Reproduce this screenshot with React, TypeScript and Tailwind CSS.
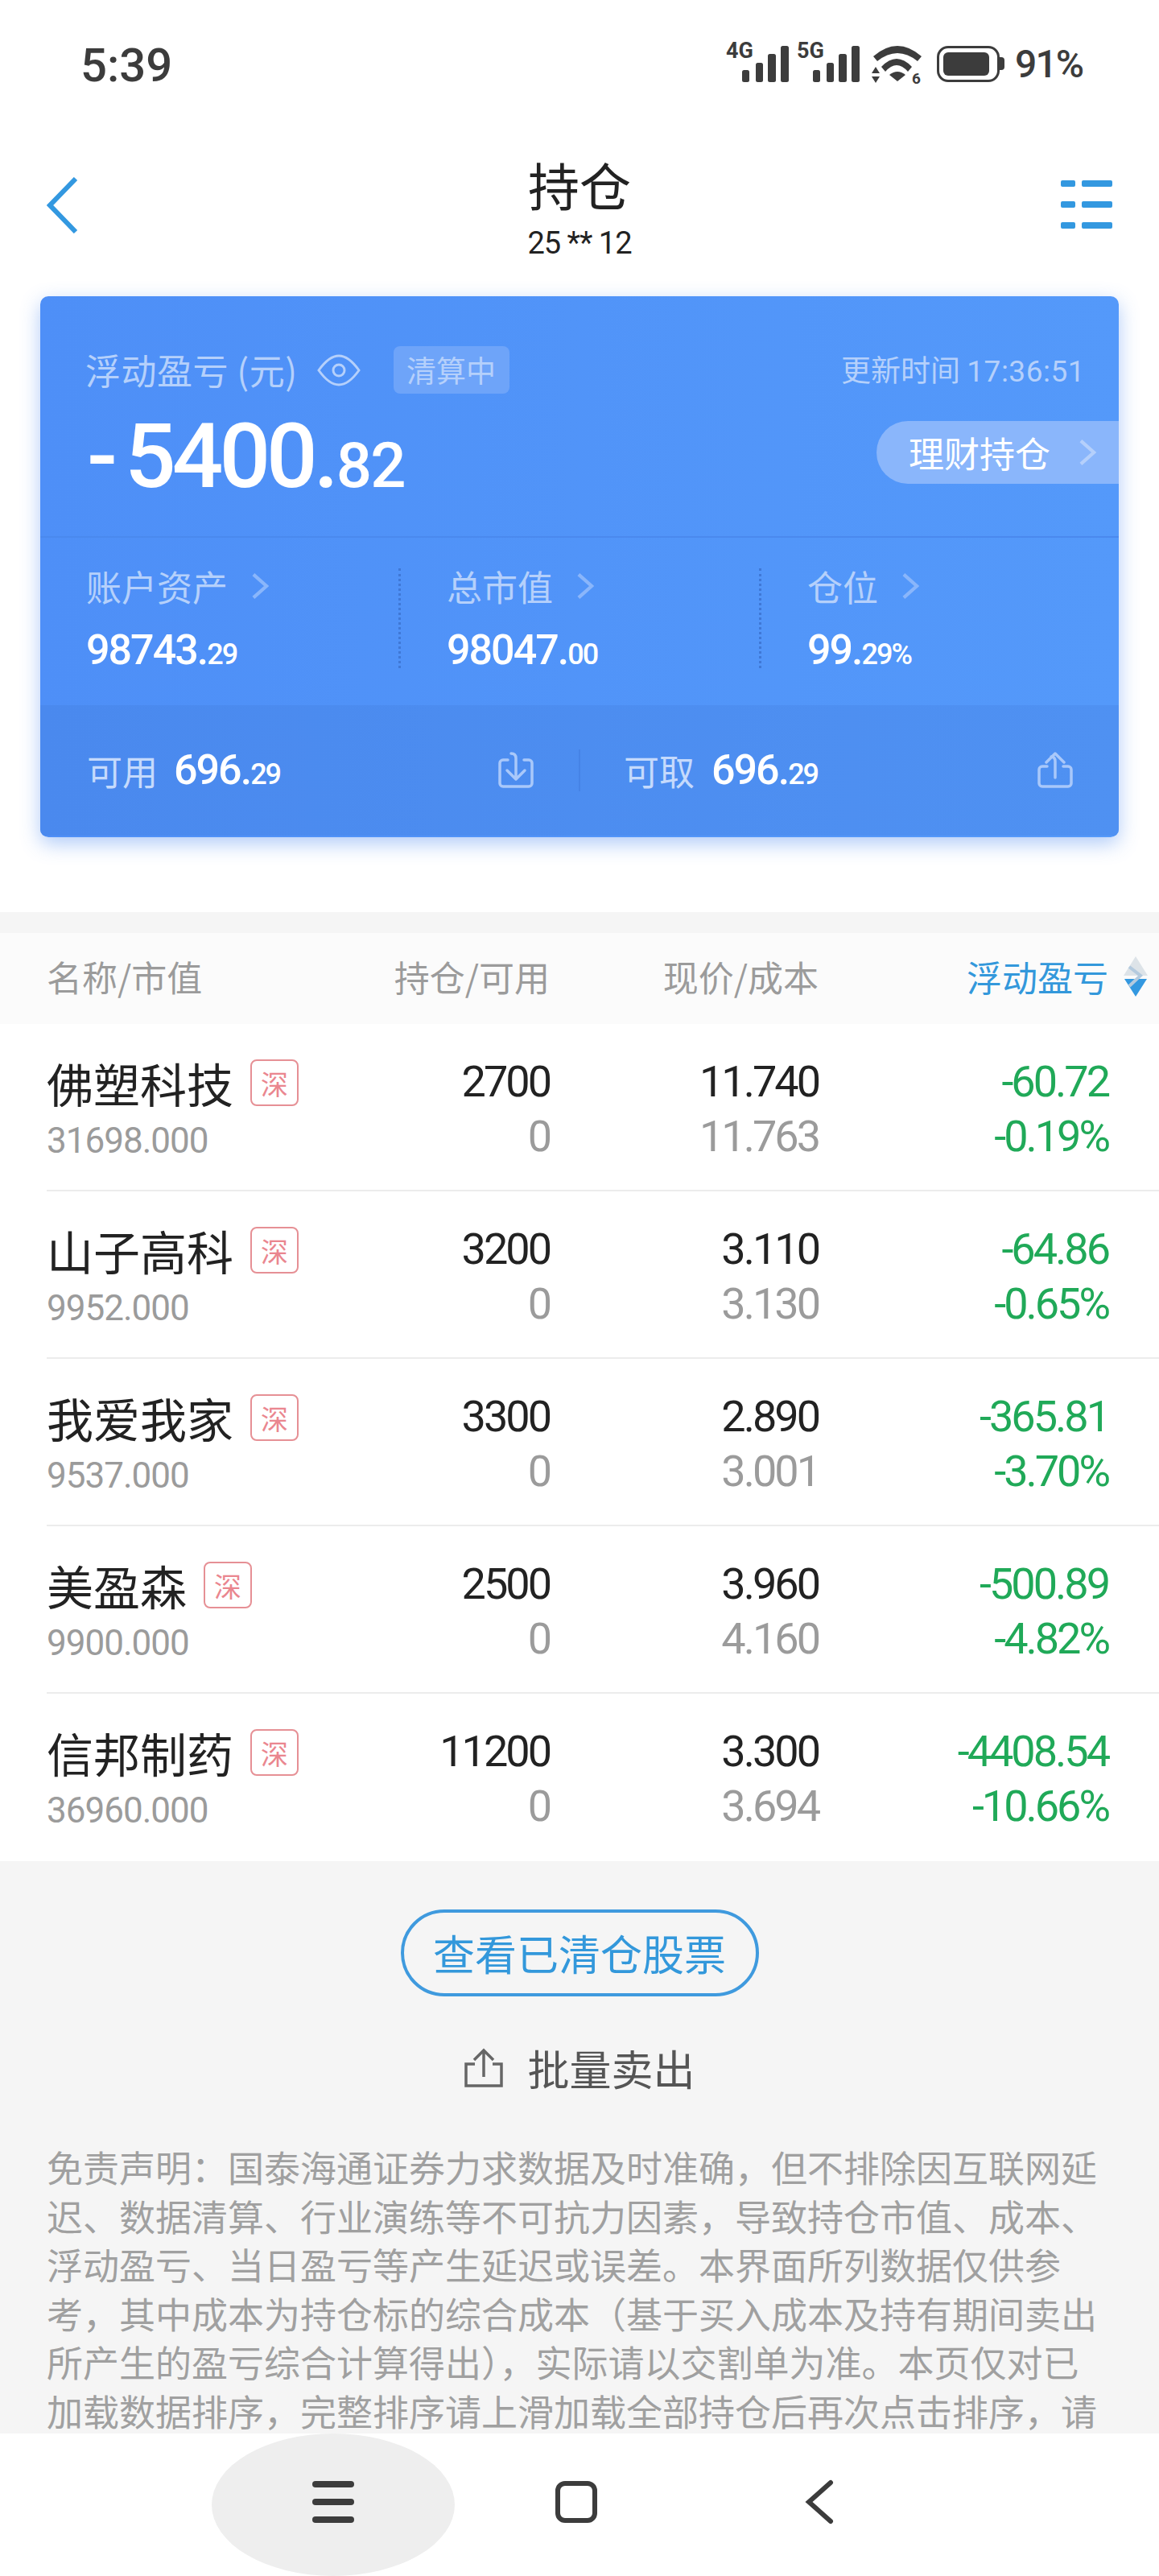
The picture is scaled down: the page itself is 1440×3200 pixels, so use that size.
const num = "[font-family:Roboto,'Noto_Sans_CJK_SC',sans-serif]";

const stocks = [
  { name: '佛塑科技', value: '31698.000', qty: '2700', price: '11.740', cost: '11.763', pl: '-60.72', pct: '-0.19%' },
  { name: '山子高科', value: '9952.000', qty: '3200', price: '3.110', cost: '3.130', pl: '-64.86', pct: '-0.65%' },
  { name: '我爱我家', value: '9537.000', qty: '3300', price: '2.890', cost: '3.001', pl: '-365.81', pct: '-3.70%' },
  { name: '美盈森', value: '9900.000', qty: '2500', price: '3.960', cost: '4.160', pl: '-500.89', pct: '-4.82%' },
  { name: '信邦制药', value: '36960.000', qty: '11200', price: '3.300', cost: '3.694', pl: '-4408.54', pct: '-10.66%' },
];

const stats = [
  { label: '账户资产', big: '98743.', small: '29' },
  { label: '总市值', big: '98047.', small: '00' },
  { label: '仓位', big: '99.', small: '29%' },
];

const disclaimer = [
  '免责声明：国泰海通证券力求数据及时准确，但不排除因互联网延',
  '迟、数据清算、行业演练等不可抗力因素，导致持仓市值、成本、',
  '浮动盈亏、当日盈亏等产生延迟或误差。本界面所列数据仅供参',
  '考，其中成本为持仓标的综合成本（基于买入成本及持有期间卖出',
  '所产生的盈亏综合计算得出），实际请以交割单为准。本页仅对已',
  '加载数据排序，完整排序请上滑加载全部持仓后再次点击排序，请',
];

function Chevron({ className }: { className?: string }) {
  return (
    <svg viewBox="0 0 22 34" className={className} fill="none" stroke="currentColor" strokeWidth="4.5">
      <path d="M2 2l17 15L2 32" />
    </svg>
  );
}

function Signal({ label }: { label: string }) {
  return (
    <div className="relative h-[50px] w-[78px]">
      <span className="absolute left-0 top-[-3px] text-[27px] leading-[27px] font-bold text-[#3c3c3c] [font-family:Roboto,sans-serif]">{label}</span>
      <svg viewBox="0 0 78 50" className="absolute inset-0 h-[50px] w-[78px]" fill="#3c3c3c">
        <rect x="20" y="34" width="9" height="15" rx="2.5" />
        <rect x="37" y="25" width="9" height="24" rx="2.5" />
        <rect x="52" y="14" width="10" height="35" rx="2.5" />
        <rect x="68" y="4" width="10" height="45" rx="2.5" />
      </svg>
    </div>
  );
}

function StatusBar() {
  return (
    <div className="flex h-[140px] shrink-0 items-start justify-between pl-[100px] pr-[95px] pt-[52px] text-[#3c3c3c]">
      <span className="text-[58px] leading-[58px] font-medium [font-family:Roboto,sans-serif]">5:39</span>
      <div className="flex items-start pt-[1px]">
        <Signal label="4G" />
        <div className="ml-[10px]"><Signal label="5G" /></div>
        <svg viewBox="0 0 63 48" className="ml-[15px] mt-[4px] h-[48px] w-[63px] overflow-visible" fill="#3c3c3c">
          <path d="M2 13Q32-13 62 13L57 19Q32-1 7 19Z" />
          <path d="M12 26Q31 6 50 26L45 32Q31 16 17 32Z" />
          <path d="M22 36Q32 28 42 36L32 44Z" />
          <path d="M5 26l5 8H0zM5 46l5-8H0z" />
          <text x="50" y="47" fontSize="19" fontWeight="700" fontFamily="Roboto">6</text>
        </svg>
        <div className="relative ml-[18px] mt-[4px] flex h-[45px] w-[78px] items-center rounded-[14px] border-[3px] border-[#3c3c3c] p-[5px]">
          <div className="h-full w-[57px] rounded-[6px] bg-[#3c3c3c]" />
          <div className="absolute right-[-9px] top-[11px] h-[16px] w-[6px] rounded-r-[4px] bg-[#3c3c3c]" />
        </div>
        <span className="ml-[19px] mt-[2px] text-[48px] leading-[50px] font-medium tracking-[-2px] [font-family:Roboto,sans-serif]">91%</span>
      </div>
    </div>
  );
}

function NavBar() {
  return (
    <div className="flex h-[228px] shrink-0 items-start justify-between px-[58px]">
      <div className="w-[64px]">
        <svg viewBox="0 0 40 70" className="mt-[80px] h-[70px] w-[40px]" fill="none" stroke="#3398e0" strokeWidth="6">
          <path d="M36 2L4 35l32 33" />
        </svg>
      </div>
      <div className="flex flex-col items-center pt-[50px] text-[#222]">
        <div className="text-[64px] leading-[76px] [font-family:'Noto_Sans_CJK_SC',sans-serif]">持仓</div>
        <div className="mt-[18px] text-[38px] leading-[36px] tracking-[-1px] [font-family:Roboto,sans-serif]">25 ** 12</div>
      </div>
      <div className="mt-[84px] flex w-[64px] flex-col gap-[18px]">
        {[0, 1, 2].map((i) => (
          <div key={i} className="flex h-[8px] gap-[8px]">
            <div className="h-full w-[18px] rounded-[2px] bg-[#3398e0]" />
            <div className="h-full flex-1 rounded-[2px] bg-[#3398e0]" />
          </div>
        ))}
      </div>
    </div>
  );
}

function Amount({ big, small }: { big: string; small: string }) {
  return (
    <span className="font-medium text-white [font-family:Roboto,sans-serif]">
      <span className="text-[52px] tracking-[-2px]">{big}</span>
      <span className="text-[36px] tracking-[-2px]">{small}</span>
    </span>
  );
}

function AssetCard() {
  return (
    <div className="mx-[50px] h-[672px] shrink-0 overflow-hidden rounded-[10px] bg-gradient-to-r from-[#4e8ff7] to-[#5499fa] shadow-[0_8px_24px_rgba(80,140,240,0.45)] [font-family:'Noto_Sans_CJK_SC',sans-serif]">
      <div className="relative h-[300px] border-b-2 border-[#4a89ee] pl-[56px]">
        <div className="flex items-center pt-[62px]">
          <span className="text-[44px] leading-[59px] tracking-[0.5px] text-[#b5d0fb]">浮动盈亏 (元)</span>
          <svg viewBox="0 0 54 40" className="ml-[24px] h-[40px] w-[54px]" fill="none" stroke="#b5d0fb" strokeWidth="3">
            <path d="M2 20C12 6 20 2 27 2s15 4 25 18C42 34 34 38 27 38S12 34 2 20z" />
            <circle cx="27" cy="20" r="7" />
          </svg>
          <span className="ml-[41px] flex h-[59px] w-[144px] items-center justify-center rounded-[8px] bg-[#6ea4f9] text-[37px] text-[#b5d0fb]">清算中</span>
          <span className="absolute right-[42px] top-[62px] text-[37px] leading-[56px] text-[#b5d0fb]">更新时间 <span className="[font-family:Roboto,sans-serif] tracking-[0.5px]">17:36:51</span></span>
        </div>
        <div className="mt-[20px] pl-[2px] font-medium text-white [font-family:Roboto,sans-serif] leading-[116px]">
          <span className="text-[112px] tracking-[-5px]"><span className="mr-[14px]">-</span>5400.</span>
          <span className="ml-[2px] text-[78px] tracking-[-2px]">82</span>
        </div>
        <div className="absolute right-0 top-[155px] flex h-[78px] w-[301px] items-center rounded-l-full bg-[#8ab6fb] pl-[40px] text-[44px] text-white">
          <span>理财持仓</span>
          <Chevron className="ml-[36px] h-[36px] w-[21px] text-[#b5d0fb]" />
        </div>
      </div>
      <div className="grid h-[208px] grid-cols-[448px_448px_1fr] pl-[57px] pt-[32px]">
        {stats.map((s, i) => (
          <div key={s.label} className="relative">
            {i > 0 && <div className="absolute left-[-60px] top-[6px] h-[124px] border-l-[3px] border-dotted border-[#3f78d6]" />}
            <div className="flex items-center text-[44px] leading-[56px] text-[#b5d0fb]">
              <span>{s.label}</span>
              <Chevron className="ml-[30px] h-[36px] w-[21px] text-[#8ab6fb]" />
            </div>
            <div className="mt-[20px] leading-[64px]">
              <Amount big={s.big} small={s.small} />
            </div>
          </div>
        ))}
      </div>
      <div className="flex h-[162px] items-center bg-gradient-to-r from-[#4a89ee] to-[#4f91f2] pl-[58px] pr-[56px]">
        <div className="flex w-[611px] items-center">
          <span className="text-[44px] text-[#c5dafc]">可用</span>
          <span className="ml-[20px]"><Amount big="696." small="29" /></span>
          <svg viewBox="0 0 46 46" className="ml-auto mr-[55px] h-[46px] w-[46px]" fill="none" stroke="#a9c8fa" strokeWidth="3.5" strokeLinecap="round" strokeLinejoin="round">
            <path d="M13 10H7a4 4 0 0 0-4 4v25a4 4 0 0 0 4 4h32a4 4 0 0 0 4-4V14a4 4 0 0 0-4-4h-6M17 2c4 0 6 2 6 6v24M12 23l11 11 11-11" />
          </svg>
        </div>
        <div className="h-[52px] w-[2px] bg-[#4683e6]" />
        <div className="flex flex-1 items-center pl-[54px]">
          <span className="text-[44px] text-[#c5dafc]">可取</span>
          <span className="ml-[21px]"><Amount big="696." small="29" /></span>
          <svg viewBox="0 0 46 46" className="ml-auto h-[46px] w-[46px]" fill="none" stroke="#a9c8fa" strokeWidth="3.5" strokeLinecap="round" strokeLinejoin="round">
            <path d="M13 18H7a4 4 0 0 0-4 4v17a4 4 0 0 0 4 4h32a4 4 0 0 0 4-4V22a4 4 0 0 0-4-4h-6M23 32V12c0-4-2-6-5-6M12 13L23 2l11 11" />
          </svg>
        </div>
      </div>
    </div>
  );
}

function TableHead() {
  return (
    <div className="flex h-[113px] shrink-0 items-center bg-[#fbfbfb] pb-[6px] pl-[58px] text-[44px] text-[#9b9b9b] [font-family:'Noto_Sans_CJK_SC',sans-serif]">
      <div className="w-[325px]">名称/市值</div>
      <div className="w-[300px] text-right">持仓/可用</div>
      <div className="w-[334px] text-right">现价/成本</div>
      <div className="w-[360px] text-right text-[#3398db]">浮动盈亏</div>
      <svg viewBox="0 0 30 50" className="ml-[19px] h-[50px] w-[30px]">
        <path d="M15 0l15 24H0z" fill="#dde3e8" />
        <path d="M1 28h28L15 50z" fill="#3398e0" />
        <path d="M7 13l14 11-14 13" fill="none" stroke="#b4cade" strokeWidth="4" />
      </svg>
    </div>
  );
}

function StockRow({ s, last }: { s: typeof stocks[number]; last: boolean }) {
  return (
    <div className={`ml-[58px] flex h-[208px] items-start border-b-2 pt-[38px] ${last ? 'border-transparent' : 'border-[#ececec]'}`}>
      <div className="w-[325px]">
        <div className="flex h-[70px] items-center">
          <span className="text-[58px] leading-[70px] text-[#222] [font-family:'Noto_Sans_CJK_SC',sans-serif]">{s.name}</span>
          <span className="ml-[21px] flex h-[58px] w-[60px] items-center justify-center rounded-[8px] border-2 border-[#e69095] text-[34px] text-[#ea868f] [font-family:'Noto_Sans_CJK_SC',sans-serif]">深</span>
        </div>
        <div className={`mt-[2px] text-[44px] leading-[70px] tracking-[-1px] text-[#9b9b9b] ${num}`}>{s.value}</div>
      </div>
      <div className={`w-[300px] text-right ${num} text-[54px] leading-[68px] tracking-[-3px]`}>
        <div className="text-[#222]">{s.qty}</div>
        <div className="text-[#9b9b9b]">0</div>
      </div>
      <div className={`w-[334px] text-right ${num} text-[54px] leading-[68px] tracking-[-3px]`}>
        <div className="text-[#222]">{s.price}</div>
        <div className="text-[#9b9b9b]">{s.cost}</div>
      </div>
      <div className={`w-[360px] text-right ${num} text-[54px] leading-[68px] tracking-[-3px] text-[#20a958]`}>
        <div>{s.pl}</div>
        <div>{s.pct}</div>
      </div>
    </div>
  );
}

function Footer() {
  return (
    <div className="flex min-h-0 flex-1 flex-col items-center overflow-hidden bg-[#f5f5f5] [font-family:'Noto_Sans_CJK_SC',sans-serif]">
      <div className="mt-[60px] flex h-[108px] w-[445px] shrink-0 items-center justify-center rounded-full border-4 border-[#3f9ade] text-[52px] text-[#3398db]">查看已清仓股票</div>
      <div className="mt-[54px] flex h-[70px] shrink-0 items-center text-[#555]">
        <svg viewBox="0 0 50 50" className="h-[50px] w-[50px]" fill="none" stroke="#666" strokeWidth="3.5">
          <path d="M14 20H3v27h44V20H36M25 36V3M13 15L25 3l12 12" />
        </svg>
        <span className="ml-[29px] text-[52px]">批量卖出</span>
      </div>
      <div className="mt-[58px] w-full shrink-0 pl-[58px] text-[45px] leading-[60.5px] whitespace-nowrap text-[#a0a0a0]">
        {disclaimer.map((line) => <div key={line}>{line}</div>)}
      </div>
    </div>
  );
}

function BottomNav() {
  return (
    <div className="flex h-[177px] shrink-0 justify-center bg-white pr-[8px]">
      <div className="flex h-full w-[302px] flex-col items-center justify-center gap-[14px] rounded-[50%] bg-[#eeeeee] pb-[8px]">
        {[0, 1, 2].map((i) => <div key={i} className="h-[8px] w-[52px] rounded-full bg-[#3c3c3c]" />)}
      </div>
      <div className="flex w-[302px] items-center justify-center pb-[8px]">
        <div className="h-[52px] w-[52px] rounded-[12px] border-[6px] border-[#3c3c3c]" />
      </div>
      <div className="flex w-[302px] items-center justify-center pb-[8px]">
        <svg viewBox="0 0 36 56" className="h-[56px] w-[36px]" fill="none" stroke="#3c3c3c" strokeWidth="6" strokeLinecap="round">
          <path d="M32 4L5 28l27 24" />
        </svg>
      </div>
    </div>
  );
}

export default function App() {
  return (
    <div className="flex h-[3200px] w-[1440px] flex-col overflow-hidden bg-white">
      <StatusBar />
      <NavBar />
      <AssetCard />
      <div className="mt-[93px] h-[26px] shrink-0 bg-[#f5f5f5]" />
      <TableHead />
      <div className="shrink-0">
        {stocks.map((s, i) => <StockRow key={s.name} s={s} last={i === stocks.length - 1} />)}
      </div>
      <Footer />
      <BottomNav />
    </div>
  );
}
